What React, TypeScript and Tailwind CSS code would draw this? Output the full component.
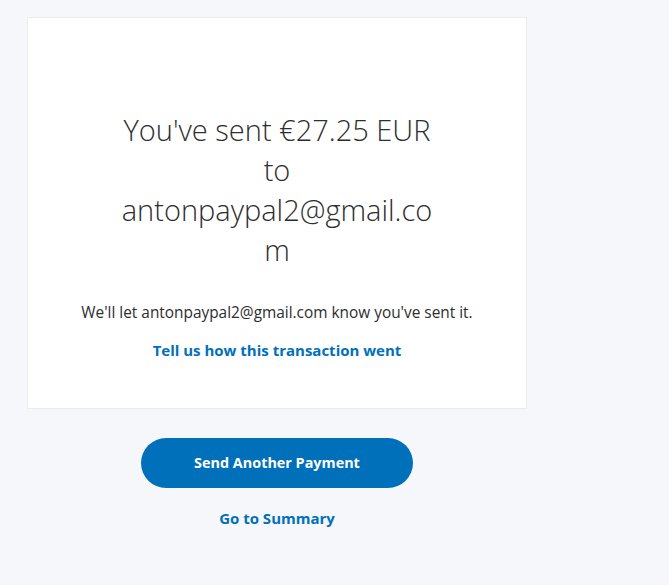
export default function App(): JSX.Element {
    return (
        <div className="min-h-[585px] w-full bg-[#f5f7fa] pt-[17px] pl-[27px] font-['Open_Sans',sans-serif]">
            <div className="flex w-[500px] flex-col">
                <div className="flex h-[392px] flex-col items-center border border-[#eaeced] bg-white pt-[92px]">
                    <h1 className="w-[322px] text-center text-[29px] leading-[40px] font-light text-[#2c2e2f] [overflow-wrap:anywhere]">
                        You've sent €27.25 EUR to antonpaypal2@gmail.com
                    </h1>
                    <p className="mt-[32px] text-[15.4px] leading-[22px] text-[#2c2e2f]">
                        We'll let antonpaypal2@gmail.com know you've sent it.
                    </p>
                    <a
                        href="#"
                        className="mt-[15px] text-[15px] leading-[22px] font-bold text-[#0070ba]">
                        Tell us how this transaction went
                    </a>
                </div>
                <div className="mt-[29px] flex flex-col items-center">
                    <button className="h-[50px] w-[272px] rounded-full bg-[#0070ba] text-[14.4px] font-bold text-white">
                        Send Another Payment
                    </button>
                    <a
                        href="#"
                        className="mt-[19px] text-[15px] leading-[22px] font-bold text-[#0070ba]">
                        Go to Summary
                    </a>
                </div>
            </div>
        </div>
    )
}
